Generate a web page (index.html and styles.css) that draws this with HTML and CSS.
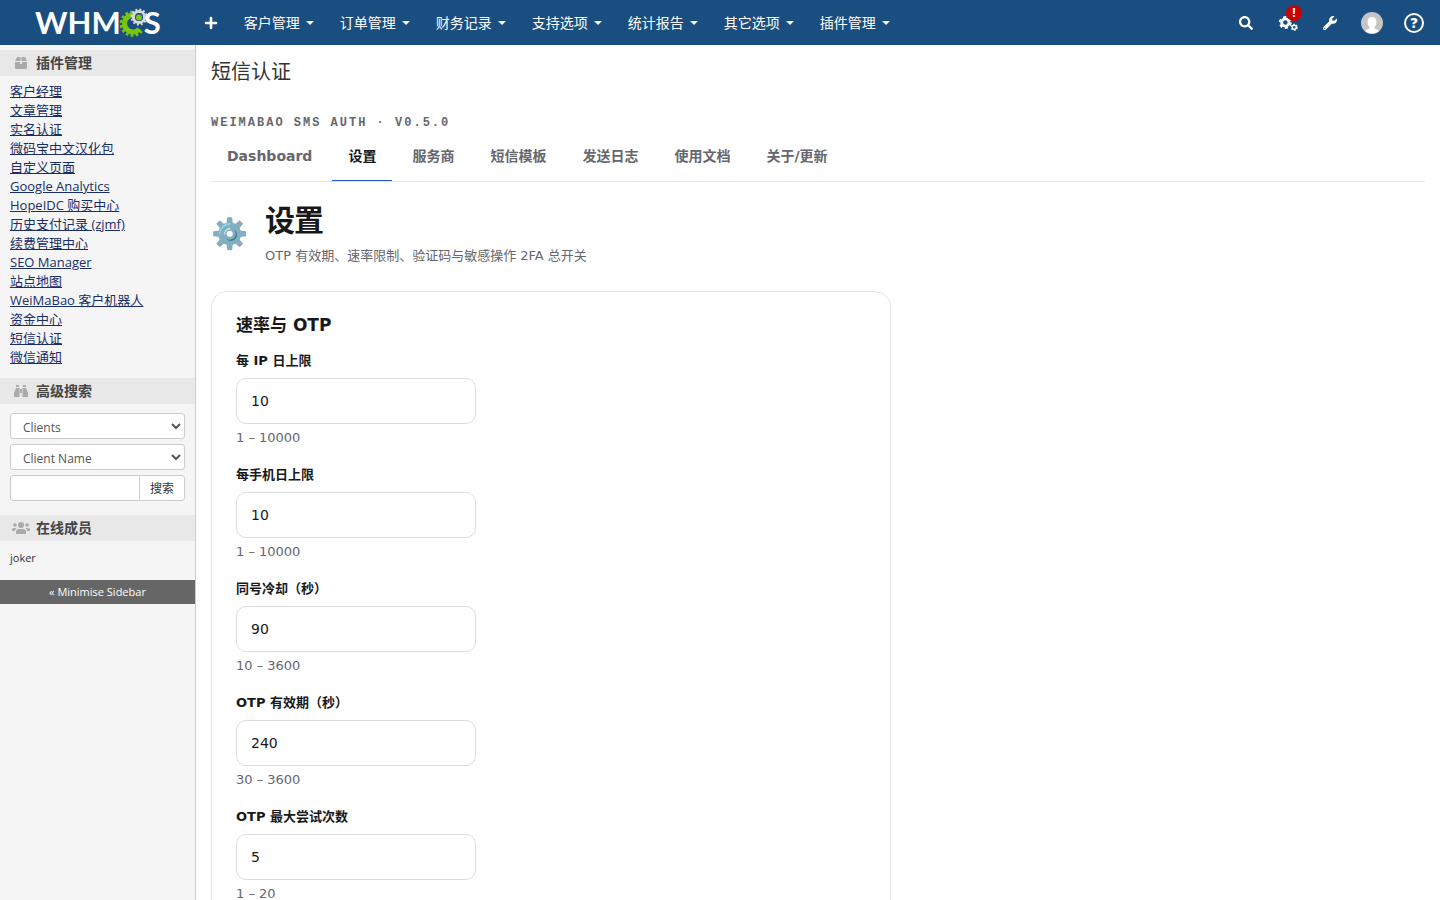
FILE: index.html
```html
<!DOCTYPE html>
<html lang="zh-CN">
	<head>
		<meta charset="UTF-8" />
		<meta name="viewport" content="width=device-width, initial-scale=1.0" />
		<title>WHMCS - 短信认证</title>
		<link rel="stylesheet" href="styles.css">
	</head>
	<body>
		<header class="topbar">
			<a href="#" class="logo" aria-label="WHMCS">
				<span>WHM</span>
				<svg class="logo-gear" viewBox="0 0 30 30" aria-hidden="true">
					<path d="M20.500 10A8.500 8.500 0 1 0 20.500 21" fill="none" stroke="#79c60d" stroke-width="5" />
					<path d="M22.500 8.500A11.500 11.500 0 1 0 22.500 23" fill="none" stroke="#79c60d" stroke-width="3" stroke-dasharray="2.700 2.200" />
					<circle cx="20" cy="9" r="5.500" fill="none" stroke="#d9d9d9" stroke-width="3" />
					<circle cx="20" cy="9" r="7.500" fill="none" stroke="#d9d9d9" stroke-width="2" stroke-dasharray="2 1.930" />
					<circle cx="20" cy="9" r="4" fill="#1a4d80" />
					<circle cx="20" cy="9.500" r="3" fill="#79c60d" />
				</svg>
				<span>S</span>
			</a>
			<nav class="nav">
				<a href="#" class="nav-add" aria-label="添加"><svg viewBox="0 0 14 14"><path d="M7 2v10M2 7h10" stroke="currentColor" stroke-width="2.600" stroke-linecap="round" /></svg></a>
				<a href="#">客户管理<i class="caret"></i></a>
				<a href="#">订单管理<i class="caret"></i></a>
				<a href="#">财务记录<i class="caret"></i></a>
				<a href="#">支持选项<i class="caret"></i></a>
				<a href="#">统计报告<i class="caret"></i></a>
				<a href="#">其它选项<i class="caret"></i></a>
				<a href="#">插件管理<i class="caret"></i></a>
			</nav>
			<div class="tools">
				<a href="#" aria-label="Search"><svg class="icon-sm" viewBox="0 0 512 512"><path fill="currentColor" d="M505 442.700L405.300 343c-4.500-4.500-10.600-7-17-7H372c27.600-35.300 44-79.700 44-128C416 93.100 322.900 0 208 0S0 93.100 0 208s93.100 208 208 208c48.300 0 92.700-16.400 128-44v16.300c0 6.400 2.500 12.500 7 17l99.700 99.700c9.400 9.400 24.600 9.400 33.900 0l28.300-28.300c9.400-9.400 9.400-24.600.1-34zM208 336c-70.700 0-128-57.200-128-128 0-70.700 57.200-128 128-128 70.700 0 128 57.200 128 128 0 70.700-57.200 128-128 128z" /></svg></a>
				<a href="#" class="has-badge" aria-label="Settings">
					<svg class="icon-lg" viewBox="0 0 18 18" fill="none" stroke="currentColor">
						<circle cx="6" cy="9" r="3.500" stroke-width="2.600" />
						<circle cx="6" cy="9" r="5.200" stroke-width="1.800" stroke-dasharray="3 2.450" />
						<circle cx="14.500" cy="13.500" r="1.900" stroke-width="1.400" />
						<circle cx="14.500" cy="13.500" r="2.900" stroke-width="1" stroke-dasharray="1.600 1.440" />
					</svg>
					<span class="badge">!</span>
				</a>
				<a href="#" aria-label="Tools"><svg class="icon-sm" viewBox="0 0 512 512"><path fill="currentColor" d="M507.730 109.100c-2.240-9.030-13.540-12.090-20.120-5.510l-74.360 74.360-67.880-11.310-11.310-67.880 74.360-74.360c6.620-6.620 3.430-17.900-5.660-20.160-47.380-11.740-99.550.91-136.580 37.930-39.640 39.640-50.550 97.100-34.050 147.200L18.740 402.760c-24.990 24.990-24.990 65.510 0 90.500 24.990 24.990 65.510 24.990 90.500 0l213.210-213.210c50.120 16.710 107.470 5.680 147.370-34.220 37.070-37.070 49.700-89.320 37.910-136.730zM64 472c-13.250 0-24-10.750-24-24 0-13.260 10.750-24 24-24s24 10.740 24 24c0 13.250-10.750 24-24 24z" /></svg></a>
				<a href="#" aria-label="Account"><svg class="avatar" viewBox="0 0 22 22"><circle cx="11" cy="11" r="11" fill="#c5c5c5" /><path d="M11 5c3 0 4.500 2 4.500 5 0 2-1 4-2 5v1.500c2 .5 3.500 1 4.500 2.500a11 11 0 0 1-14 0c1-1.500 2.500-2 4.500-2.500V15c-1-1-2-3-2-5 0-3 1.500-5 4.500-5z" fill="#fff" /></svg></a>
				<a href="#" class="help" aria-label="Help">?</a>
			</div>
		</header>

		<div class="layout">
			<aside class="sidebar">
				<h2>
					<svg viewBox="0 0 18 14" fill="#aaa"><path d="M5 1h3.500v4H3zM9.500 1H13l2 4H9.500zM3 6h5v2h2V6h5v6q0 1-1 1H4q-1 0-1-1z" /></svg>
					插件管理
				</h2>
				<ul class="links">
					<li><a href="#">客户经理</a></li>
					<li><a href="#">文章管理</a></li>
					<li><a href="#">实名认证</a></li>
					<li><a href="#">微码宝中文汉化包</a></li>
					<li><a href="#">自定义页面</a></li>
					<li><a href="#">Google Analytics</a></li>
					<li><a href="#">HopeIDC 购买中心</a></li>
					<li><a href="#">历史支付记录 (zjmf)</a></li>
					<li><a href="#">续费管理中心</a></li>
					<li><a href="#">SEO Manager</a></li>
					<li><a href="#">站点地图</a></li>
					<li><a href="#">WeiMaBao 客户机器人</a></li>
					<li><a href="#">资金中心</a></li>
					<li><a href="#">短信认证</a></li>
					<li><a href="#">微信通知</a></li>
				</ul>
				<h2>
					<svg viewBox="0 0 18 14" fill="#aaa"><path d="M4 1h3v2H4zM11 1h3v2h-3zM4 4h3.500v9H2V9zM10.500 4H14l2 5v4h-5.500zM8 5h2v4H8z" /></svg>
					高级搜索
				</h2>
				<form class="search">
					<select aria-label="搜索类型"><option>Clients</option></select>
					<select aria-label="搜索字段"><option>Client Name</option></select>
					<div class="search-row">
						<input type="text" aria-label="关键词" />
						<button type="button">搜索</button>
					</div>
				</form>
				<h2>
					<svg viewBox="0 0 18 14" fill="#aaa"><circle cx="9" cy="4" r="3" /><circle cx="3" cy="4" r="1.800" /><circle cx="15" cy="4" r="1.800" /><path d="M4 13v-2q0-3 3-3h4q3 0 3 3v2zM0 9q0-2 2-2h2.500Q3 8 2.800 10H0zM18 9q0-2-2-2h-2.500q1.500 1 1.700 3H18z" /></svg>
					在线成员
				</h2>
				<p class="online">joker</p>
				<button type="button" class="minimise">« Minimise Sidebar</button>
			</aside>

			<main class="content">
				<h1>短信认证</h1>
				<p class="eyebrow">WEIMABAO SMS AUTH · V0.5.0</p>
				<nav class="tabs">
					<a href="#">Dashboard</a>
					<a href="#" class="active">设置</a>
					<a href="#">服务商</a>
					<a href="#">短信模板</a>
					<a href="#">发送日志</a>
					<a href="#">使用文档</a>
					<a href="#">关于/更新</a>
				</nav>
				<div class="page-head">
					<span class="page-icon">⚙️</span>
					<div>
						<h2>设置</h2>
						<p>OTP 有效期、速率限制、验证码与敏感操作 2FA 总开关</p>
					</div>
				</div>
				<form class="card">
					<h3>速率与 OTP</h3>
					<div class="field">
						<label for="iplimit">每 IP 日上限</label>
						<input type="text" id="iplimit" value="10" />
						<small>1 – 10000</small>
					</div>
					<div class="field">
						<label for="phonelimit">每手机日上限</label>
						<input type="text" id="phonelimit" value="10" />
						<small>1 – 10000</small>
					</div>
					<div class="field">
						<label for="cooldown">同号冷却（秒）</label>
						<input type="text" id="cooldown" value="90" />
						<small>10 – 3600</small>
					</div>
					<div class="field">
						<label for="otpttl">OTP 有效期（秒）</label>
						<input type="text" id="otpttl" value="240" />
						<small>30 – 3600</small>
					</div>
					<div class="field">
						<label for="otptries">OTP 最大尝试次数</label>
						<input type="text" id="otptries" value="5" />
						<small>1 – 20</small>
					</div>
				</form>
			</main>
		</div>
	</body>
</html>
```
FILE: styles.css
```css
* {
	box-sizing: border-box;
}

body {
	margin: 0;
	height: 100vh;
	display: flex;
	flex-direction: column;
	font-family: "Open Sans", "DejaVu Sans", "Noto Sans CJK JP", sans-serif;
	font-size: 14px;
	color: #333;
	background: #fff;
}

h1,
h2,
h3,
p,
ul {
	margin: 0;
	padding: 0;
}

.topbar {
	display: flex;
	align-items: center;
	flex: none;
	height: 45px;
	padding: 0 16px 0 35px;
	background: #1a4d80;
}

.topbar a {
	color: #fff;
	text-decoration: none;
}

.logo {
	display: flex;
	align-items: center;
	font-family: Lato, sans-serif;
	font-size: 31px;
	font-weight: 700;
	line-height: 45px;
}

.logo-gear {
	width: 30px;
	height: 30px;
	margin: 0 -5px 0 -2px;
}

.nav {
	display: flex;
	align-items: center;
	margin-left: 30px;
}

.nav a {
	display: flex;
	align-items: center;
	gap: 6px;
	padding: 0 13px;
	line-height: 45px;
}

.nav svg {
	width: 14px;
	height: 14px;
}

.caret {
	border: 4px solid transparent;
	border-top-color: #fff;
	border-bottom: 0;
}

.tools {
	display: flex;
	align-items: center;
	margin-left: auto;
	gap: 22px;
}

.tools a {
	display: flex;
	align-items: center;
	justify-content: center;
	width: 20px;
	height: 22px;
}

.icon-sm {
	width: 14px;
	height: 14px;
}

.icon-lg {
	width: 19px;
	height: 19px;
	flex: none;
}

.avatar {
	width: 22px;
	height: 22px;
	flex: none;
}

.has-badge {
	position: relative;
}

.badge {
	position: absolute;
	top: -7px;
	right: -4px;
	width: 16px;
	height: 16px;
	border-radius: 8px;
	background: #c00;
	font-size: 12px;
	font-weight: 700;
	line-height: 16px;
	text-align: center;
}

.tools .help {
	height: 20px;
	border: 2px solid #fff;
	border-radius: 50%;
	font-size: 14px;
	font-weight: 800;
}

.layout {
	display: flex;
	flex: 1;
	min-height: 0;
}

.sidebar {
	flex: none;
	width: 196px;
	padding-top: 5px;
	border-right: 1px solid #ccc;
	background: #f5f5f5;
	overflow: hidden;
}

.sidebar h2 {
	display: flex;
	align-items: center;
	gap: 6px;
	height: 26px;
	padding-left: 12px;
	background: #e8e8e8;
	color: #444;
	font-size: 14px;
	font-weight: 700;
	line-height: 24px;
}

.sidebar h2 svg {
	width: 18px;
	height: 14px;
}

.links {
	padding: 6px 10px 11px;
	list-style: none;
	font-size: 13px;
	line-height: 19px;
}

.links li {
	height: 19px;
}

.links a {
	color: #1a2e68;
}

.search {
	display: flex;
	flex-direction: column;
	gap: 5px;
	padding: 9px 10px 14px;
}

.search select,
.search input,
.search button {
	height: 26px;
	border: 1px solid #ccc;
	border-radius: 3px;
	background: #fff;
	color: #555;
	font-family: inherit;
	font-size: 12px;
}

.search select {
	padding: 2px 8px 0;
}

.search-row {
	display: flex;
}

.search-row input {
	flex: 1;
	min-width: 0;
	border-radius: 3px 0 0 3px;
}

.search-row button {
	width: 46px;
	margin-left: -1px;
	padding: 0;
	border-radius: 0 3px 3px 0;
	color: #333;
}

.online {
	padding: 9px 10px 14px;
	font-size: 11px;
	line-height: 16px;
}

.minimise {
	display: block;
	width: 100%;
	height: 24px;
	padding: 0 0 2px;
	border: 0;
	background: #666;
	color: #fff;
	font-family: inherit;
	font-size: 11px;
}

.content {
	flex: 1;
	min-width: 0;
	padding: 13px 15px 40px;
	overflow-y: auto;
	scrollbar-width: none;
	font-family: "DejaVu Sans", "Noto Sans CJK JP", sans-serif;
	color: #18181b;
}

.content h1 {
	font-family: "Open Sans", "DejaVu Sans", "Noto Sans CJK JP", sans-serif;
	font-size: 20px;
	font-weight: 400;
	line-height: 28px;
	color: #333;
}

.eyebrow {
	margin-top: 29px;
	font-family: "Liberation Mono", monospace;
	font-size: 12px;
	font-weight: 700;
	line-height: 16px;
	letter-spacing: 2px;
	color: #66666e;
}

.tabs {
	display: flex;
	gap: 4px;
	margin-top: 1px;
	border-bottom: 1px solid #e4e4e7;
}

.tabs a {
	padding: 12px 16px;
	border-bottom: 1px solid transparent;
	color: #66666e;
	font-weight: 700;
	line-height: 24px;
	text-decoration: none;
}

.tabs .active {
	border-bottom-color: #2457d6;
	color: #18181b;
}

.page-head {
	display: flex;
	align-items: center;
	gap: 18px;
	margin: 19px 0 25px;
}

.page-icon {
	width: 36px;
	font-size: 30px;
	line-height: 36px;
}

.page-head h2 {
	font-size: 30px;
	line-height: 40px;
	letter-spacing: -1px;
}

.page-head p {
	margin-top: 5px;
	font-size: 13px;
	line-height: 20px;
	color: #66666e;
}

.card {
	max-width: 680px;
	padding: 20px 24px;
	border: 1px solid #e4e4e7;
	border-radius: 16px;
}

.card h3 {
	font-size: 17px;
	line-height: 26px;
}

.field {
	display: flex;
	flex-direction: column;
	margin-top: 13px;
}

.field + .field {
	margin-top: 18px;
}

.field label {
	font-size: 13px;
	font-weight: 700;
	line-height: 20px;
}

.field input {
	width: 240px;
	height: 46px;
	margin: 7px 0 5px;
	padding: 0 14px;
	border: 1px solid #dcdce0;
	border-radius: 10px;
	background: #fff;
	color: #18181b;
	font-family: inherit;
	font-size: 14px;
}

.field small {
	font-size: 13px;
	line-height: 18px;
	color: #66666e;
}
```
